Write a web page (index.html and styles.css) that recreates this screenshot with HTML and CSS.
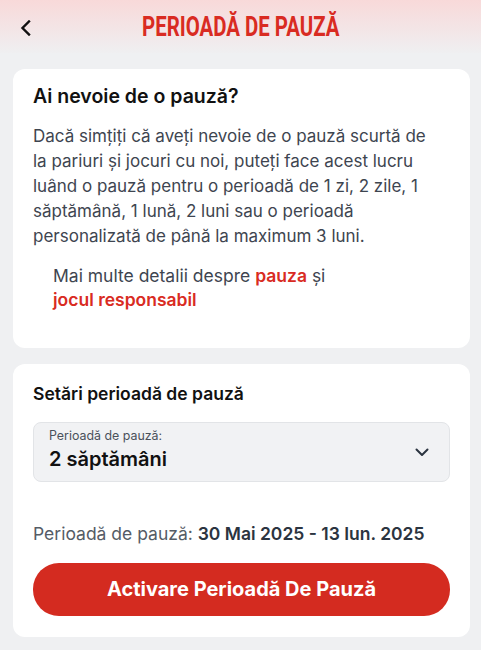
FILE: index.html
```html
<!DOCTYPE html>
<html lang="ro">
<head>
    <meta charset="UTF-8">
    <meta name="viewport" content="width=device-width, initial-scale=1.0">
    <title>Perioadă de pauză</title>
    <link rel="stylesheet" href="styles.css">
</head>
<body>
    <header class="topbar">
        <button class="back" aria-label="Înapoi">
            <svg width="12" height="16" viewBox="0 0 12 16"><path d="M9 1.5L2.5 8L9 14.5" fill="none" stroke="#111" stroke-width="2.4" stroke-linecap="square"/></svg>
        </button>
        <h1 class="title"><span>PERIOADĂ DE PAUZĂ</span></h1>
    </header>

    <main class="content">
        <section class="card">
            <h2 class="card-title">Ai nevoie de o pauză?</h2>
            <p class="text">Dacă simțiți că aveți nevoie de o pauză scurtă de la pariuri și jocuri cu noi, puteți face acest lucru luând o pauză pentru o perioadă de 1 zi, 2 zile, 1 săptămână, 1 lună, 2 luni sau o perioadă personalizată de până la maximum 3 luni.</p>
            <p class="more">Mai multe detalii despre <a href="#">pauza</a> și <a href="#">jocul responsabil</a></p>
        </section>

        <section class="card settings">
            <h3 class="card-subtitle">Setări perioadă de pauză</h3>
            <div class="select">
                <div class="select-text">
                    <span class="select-label">Perioadă de pauză:</span>
                    <span class="select-value">2 săptămâni</span>
                </div>
                <svg class="chevron" width="14" height="9" viewBox="0 0 14 9"><path d="M1.5 1.5L7 7L12.5 1.5" fill="none" stroke="#2b3440" stroke-width="2" stroke-linecap="round" stroke-linejoin="round"/></svg>
            </div>
            <p class="period">Perioadă de pauză: <strong>30 Mai 2025 - 13 Iun. 2025</strong></p>
            <button class="activate">Activare Perioadă De Pauză</button>
        </section>
    </main>
</body>
</html>
```

FILE: styles.css
```css
body {
    margin: 0;
    font-family: Inter, "Noto Sans", sans-serif;
    background: #eff0f2;
    color: #111;
}
.topbar {
    height: 53px;
    display: flex;
    align-items: center;
    justify-content: center;
    position: relative;
    background: linear-gradient(#f8d9d9 0%, #efeff1 100%);
}
.back {
    position: absolute;
    left: 15px;
    top: 17px;
    width: 22px;
    height: 22px;
    padding: 0;
    border: 0;
    background: none;
    display: flex;
    align-items: center;
    justify-content: center;
}
.title {
    margin: 0;
    font-family: Roboto, sans-serif;
    font-weight: 700;
    font-size: 27px;
    color: #d92b22;
}
.title span {
    display: inline-block;
    transform: scaleX(0.755);
}
.content {
    padding: 16px 11px 14px 13px;
    display: flex;
    flex-direction: column;
    gap: 16px;
}
.card {
    background: #fff;
    border-radius: 12px;
    padding: 14px 20px 20px;
}
.card-title {
    margin: 0 0 14.5px;
    font-size: 19.5px;
    font-weight: 600;
    line-height: 26px;
}
.text {
    margin: 0;
    padding-right: 8px;
    font-size: 17px;
    line-height: 25px;
    color: #3e4550;
}
.more {
    margin: 15.7px 0 16px 20px;
    font-size: 17.5px;
    line-height: 24px;
    color: #3e4550;
    padding-right: 100px;
}
.more a {
    color: #d92b22;
    font-weight: 600;
    text-decoration: none;
}
.settings {
    padding: 19px 20px 21px;
}
.card-subtitle {
    margin: 0 0 16.4px;
    font-size: 17.5px;
    font-weight: 600;
    line-height: 22px;
}
.select {
    border: 1px solid #e2e4e7;
    border-radius: 8px;
    background: #f1f2f4;
    display: flex;
    align-items: flex-start;
    justify-content: space-between;
    padding: 5px 20px 0 15px;
    height: 53px;
}
.select-text {
    display: flex;
    flex-direction: column;
}
.select-label {
    font-size: 12.4px;
    line-height: 16px;
    color: #4a515b;
}
.select-value {
    margin-top: 2px;
    font-size: 20px;
    font-weight: 600;
    line-height: 26px;
    color: #111;
}
.chevron {
    margin-top: 20px;
}
.period {
    margin: 40.6px 0 17px;
    font-size: 17.5px;
    line-height: 24px;
    color: #555c66;
}
.period strong {
    color: #2b3440;
    font-weight: 600;
}
.activate {
    display: block;
    width: 100%;
    height: 52.4px;
    border: 0;
    border-radius: 26px;
    background: #d42b20;
    color: #fff;
    font-family: Inter, sans-serif;
    font-size: 20px;
    font-weight: 700;
}
```
